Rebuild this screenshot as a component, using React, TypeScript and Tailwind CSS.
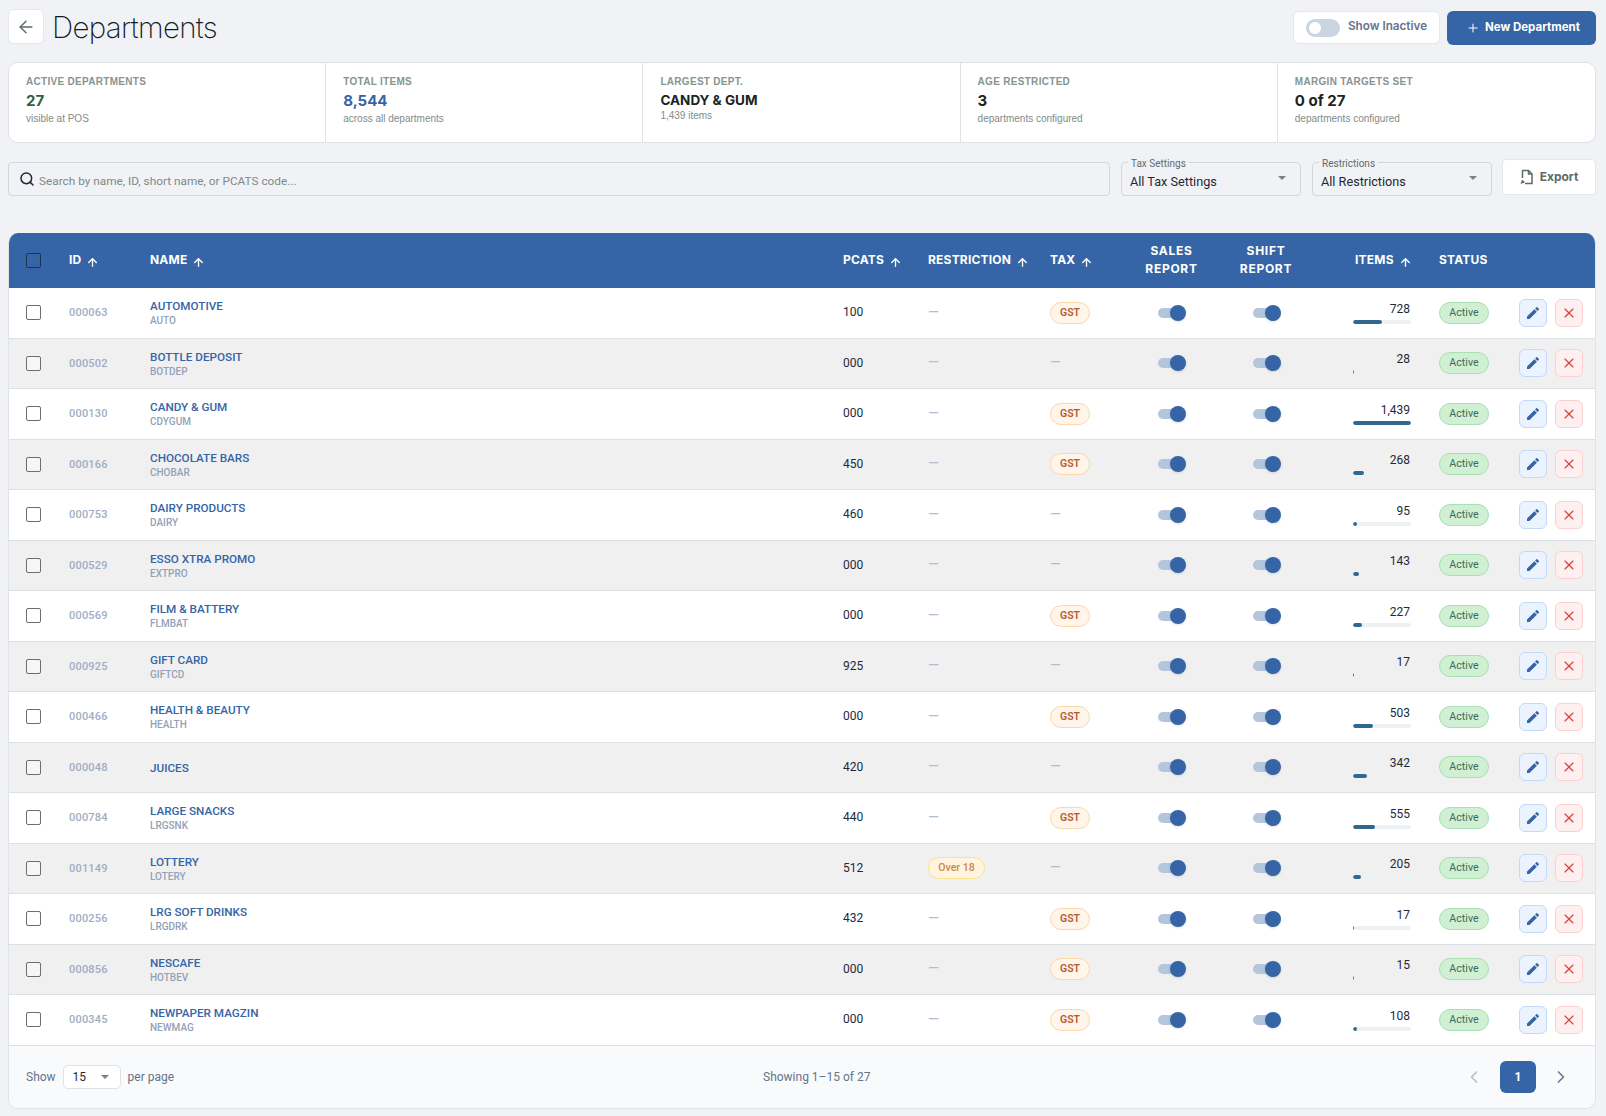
import { ArrowLeft, ArrowUp, ChevronLeft, ChevronRight, Plus, Search, X } from 'lucide-react';
import { MdEdit } from 'react-icons/md';

interface Department {
  id: string;
  name: string;
  short?: string;
  pcats: string;
  tax: boolean;
  restriction?: string;
  items: number;
}

const departments: Department[] = [
  { id: '000063', name: 'AUTOMOTIVE', short: 'AUTO', pcats: '100', tax: true, items: 728 },
  { id: '000502', name: 'BOTTLE DEPOSIT', short: 'BOTDEP', pcats: '000', tax: false, items: 28 },
  { id: '000130', name: 'CANDY & GUM', short: 'CDYGUM', pcats: '000', tax: true, items: 1439 },
  { id: '000166', name: 'CHOCOLATE BARS', short: 'CHOBAR', pcats: '450', tax: true, items: 268 },
  { id: '000753', name: 'DAIRY PRODUCTS', short: 'DAIRY', pcats: '460', tax: false, items: 95 },
  { id: '000529', name: 'ESSO XTRA PROMO', short: 'EXTPRO', pcats: '000', tax: false, items: 143 },
  { id: '000569', name: 'FILM & BATTERY', short: 'FLMBAT', pcats: '000', tax: true, items: 227 },
  { id: '000925', name: 'GIFT CARD', short: 'GIFTCD', pcats: '925', tax: false, items: 17 },
  { id: '000466', name: 'HEALTH & BEAUTY', short: 'HEALTH', pcats: '000', tax: true, items: 503 },
  { id: '000048', name: 'JUICES', pcats: '420', tax: false, items: 342 },
  { id: '000784', name: 'LARGE SNACKS', short: 'LRGSNK', pcats: '440', tax: true, items: 555 },
  { id: '001149', name: 'LOTTERY', short: 'LOTERY', pcats: '512', tax: false, restriction: 'Over 18', items: 205 },
  { id: '000256', name: 'LRG SOFT DRINKS', short: 'LRGDRK', pcats: '432', tax: true, items: 17 },
  { id: '000856', name: 'NESCAFE', short: 'HOTBEV', pcats: '000', tax: true, items: 15 },
  { id: '000345', name: 'NEWPAPER MAGZIN', short: 'NEWMAG', pcats: '000', tax: true, items: 108 },
];

const gridCols = 'grid grid-cols-[44px_81px_693px_85px_122px_90px_95px_94px_110px_80px_92px]';
const maxItems = 1439;

function Stat({ label, value, sub, valueClass, small }: { label: string; value: string; sub: string; valueClass: string; small?: boolean }) {
  return (
    <div className="pl-[17px] pt-[11px] border-r border-[#e0e3e7] last:border-r-0">
      <div className="text-[10px] leading-[15px] font-bold tracking-[0.3px] uppercase text-[#87958f] font-['Liberation_Sans',sans-serif]">{label}</div>
      <div className={`${small ? 'text-[13.5px] leading-[20px]' : 'text-[15px] leading-[22px]'} mt-[1px] font-bold ${valueClass} font-['Inter',sans-serif]`}>{value}</div>
      <div className={`${small ? '-mt-[1px]' : 'mt-0'} text-[10px] leading-[14px] text-[#7f8c88] font-['Liberation_Sans',sans-serif]`}>{sub}</div>
    </div>
  );
}

function Switch() {
  return (
    <div className="relative w-[27px] h-[10px] rounded-full bg-[#b4c5de]">
      <span className="absolute right-[-1px] top-[-3px] w-[16px] h-[16px] rounded-full bg-[#3565a6] shadow-sm" />
    </div>
  );
}

function SelectBox({ label, value }: { label: string; value: string }) {
  return (
    <div className="relative w-[180px] h-[34px] rounded-[4px] border border-[#d3d7dd] flex items-center justify-between pl-[8px] pr-[14px]">
      <span className="absolute left-[6px] top-[-5px] bg-[#f0f2f6] px-[3px] text-[10px] leading-[11px] text-[#5f6b6b]">{label}</span>
      <span className="text-[12.7px] text-[#1f2933] mt-[6px]">{value}</span>
      <span className="w-0 h-0 border-x-[4px] border-x-transparent border-t-[4px] border-t-[#7b8188] mb-[2px]" />
    </div>
  );
}

function HeaderLabel({ children, sort }: { children: React.ReactNode; sort?: boolean }) {
  return (
    <div className="pl-4 pb-[1px] flex items-center gap-[5px] h-full">
      <span>{children}</span>
      {sort && <ArrowUp size={13} strokeWidth={2.5} className="mt-[5px]" />}
    </div>
  );
}

export default function App() {
  return (
    <div className="min-h-[1116px] bg-[#f0f2f6] pl-[8px] pr-[10px] pt-[9px] font-['Roboto',sans-serif] text-[#1e293b]">
      <div className="flex items-center justify-between h-[35px]">
        <div className="flex items-center gap-[8px]">
          <button className="w-[36px] h-[35px] rounded-[6px] bg-white border border-[#e4e7eb] flex items-center justify-center text-[#5f6b6b]">
            <ArrowLeft size={20} strokeWidth={1.75} />
          </button>
          <h1 className="text-[29.5px] leading-[36px] font-extralight tracking-[-0.7px] text-[#141a1f] font-['Inter',sans-serif]">Departments</h1>
        </div>
        <div className="mt-[2px] flex items-center gap-[7px] font-['Inter',sans-serif]">
          <div className="w-[147px] h-[33px] rounded-[6px] bg-white border border-[#e4e7eb] flex items-center pl-[12px] gap-[8px]">
            <div className="relative w-[34px] h-[18px] rounded-full bg-[#cbd5e1]">
              <span className="absolute left-[3px] top-[3px] w-[12px] h-[12px] rounded-full bg-white" />
            </div>
            <span className="text-[11.7px] font-semibold text-[#64748b] mb-[1px]">Show Inactive</span>
          </div>
          <button className="w-[149px] h-[34px] rounded-[6px] bg-[#3565a6] text-white flex items-center pl-[19px] gap-[5px] text-[11.5px] font-bold pt-[1px]">
            <Plus size={14} strokeWidth={1.75} />
            New Department
          </button>
        </div>
      </div>

      <div className="mt-[18px] h-[81px] grid grid-cols-5 rounded-[10px] bg-white border border-[#e0e3e7]">
        <Stat label="Active Departments" value="27" sub="visible at POS" valueClass="text-[#2d5f45]" />
        <Stat label="Total Items" value="8,544" sub="across all departments" valueClass="text-[#3565a6]" />
        <Stat label="Largest Dept." value="CANDY & GUM" sub="1,439 items" valueClass="text-[#1a2421]" small />
        <Stat label="Age Restricted" value="3" sub="departments configured" valueClass="text-[#1a2421]" />
        <Stat label="Margin Targets Set" value="0 of 27" sub="departments configured" valueClass="text-[#1a2421]" />
      </div>

      <div className="mt-[16px] h-[37px] flex items-start">
        <div className="mt-[3px] w-[1102px] h-[34px] rounded-[4px] border border-[#d3d7dd] flex items-center pl-[10px] gap-[4px]">
          <Search size={16} strokeWidth={2.25} className="text-[#1f2933]" />
          <span className="text-[11.8px] text-[#7f8a8a] mt-[6px]">Search by name, ID, short name, or PCATS code...</span>
        </div>
        <div className="mt-[3px] ml-[11px] flex gap-[11px]">
          <SelectBox label="Tax Settings" value="All Tax Settings" />
          <SelectBox label="Restrictions" value="All Restrictions" />
        </div>
        <button className="ml-[10px] w-[94px] h-[36px] rounded-[4px] bg-white border border-[#e4e7eb] flex items-center justify-center gap-[6px] text-[12px] font-bold text-[#5f6b68] font-['Inter',sans-serif]">
          <svg width="14" height="16" viewBox="0 0 14 16" fill="none" stroke="currentColor" strokeWidth="1.5">
            <path d="M5 14.5H12V5L8.5 1.5H2.5V9" />
            <path d="M8.5 1.5V5H12" />
            <path d="M1 14.5L3.5 12M3.5 12H1.5M3.5 12V14" />
          </svg>
          Export
        </button>
      </div>

      <div className="mt-[37px] rounded-[10px] border border-[#e0e3e7] border-t-0 overflow-hidden bg-white">
        <div className={`${gridCols} h-[55px] bg-[#3565a6] text-white text-[12px] font-bold tracking-[0.2px] font-['Inter',sans-serif]`}>
          <div className="pl-[17px] flex items-center">
            <span className="w-[15px] h-[15px] rounded-[2px] border border-[#1f3350]" />
          </div>
          <HeaderLabel sort>ID</HeaderLabel>
          <HeaderLabel sort>NAME</HeaderLabel>
          <HeaderLabel sort>PCATS</HeaderLabel>
          <HeaderLabel sort>RESTRICTION</HeaderLabel>
          <HeaderLabel sort>TAX</HeaderLabel>
          <div className="pb-[2px] flex items-center justify-center text-center leading-[18px] tracking-[0.7px]">SALES<br />REPORT</div>
          <div className="pb-[2px] flex items-center justify-center text-center leading-[18px] tracking-[0.7px]">SHIFT<br />REPORT</div>
          <div className="pl-[42px] pb-[1px] flex items-center gap-[5px]">
            <span>ITEMS</span>
            <ArrowUp size={13} strokeWidth={2.5} className="mt-[5px]" />
          </div>
          <HeaderLabel>STATUS</HeaderLabel>
          <div />
        </div>

        {departments.map((d, i) => (
          <div key={d.id} className={`${gridCols} h-[50.5px] items-center border-b border-[#dcdfe3] ${i % 2 === 1 ? 'bg-[#f0f0f0]' : 'bg-white'}`}>
            <div className="pl-[17px] flex items-center">
              <span className="w-[15px] h-[15px] rounded-[2px] border border-[#6b6f73] bg-white/40" />
            </div>
            <div className="pl-4 pt-[1px] text-[11px] font-medium tracking-[0.2px] text-[#9fadc4]">{d.id}</div>
            <div className="pl-4 pt-[1px]">
              <div className="text-[11.7px] leading-[14px] font-medium text-[#3565a6]">{d.name}</div>
              {d.short && <div className="mt-[1px] text-[10px] leading-[13px] font-medium text-[#94a1b8]">{d.short}</div>}
            </div>
            <div className="pl-4 pb-[1px] text-[12px]">{d.pcats}</div>
            <div className="pl-4 flex items-center">
              {d.restriction ? (
                <span className="inline-flex items-center justify-center w-[57px] h-[22px] rounded-full bg-[#fff4e0] border border-[#fbe38e] text-[10.5px] font-medium text-[#c98a4a] -mt-[1px]">{d.restriction}</span>
              ) : (
                <span className="text-[14px] leading-none text-[#b0bcd0] mb-[2px]">—</span>
              )}
            </div>
            <div className="pl-4 flex items-center">
              {d.tax ? (
                <span className="inline-flex items-center justify-center w-[40px] h-[22px] rounded-full bg-[#fff5eb] border border-[#fbd8a8] text-[10.5px] font-semibold text-[#b85c2e]">GST</span>
              ) : (
                <span className="text-[14px] leading-none text-[#b0bcd0] mb-[2px]">—</span>
              )}
            </div>
            <div className="flex justify-center"><Switch /></div>
            <div className="flex justify-center"><Switch /></div>
            <div className="pl-[40px] pr-[12px]">
              <div className="text-right text-[12px] leading-[14px] pr-[1px]">{d.items.toLocaleString('en-US')}</div>
              <div className="mt-[4px] h-[4px] rounded-full bg-[#eef1f1] overflow-hidden">
                <div className="h-full rounded-full bg-[#32688f]" style={{ width: `${(d.items / maxItems) * 100}%` }} />
              </div>
            </div>
            <div className="pl-4 flex items-center">
              <span className="inline-flex items-center justify-center w-[50px] h-[22px] rounded-full bg-[#d0f0d4] border border-[#a9e0b2] text-[10.7px] font-normal text-[#3f6b55]">Active</span>
            </div>
            <div className="pl-[16px] flex gap-[8px]">
              <button className="w-[28px] h-[28px] rounded-[6px] bg-[#ebf3fe] border border-[#c3d9f7] flex items-center justify-center text-[#3565a6]">
                <MdEdit size={16} />
              </button>
              <button className="w-[28px] h-[28px] rounded-[6px] bg-[#fef0f0] border border-[#fbd0d0] flex items-center justify-center text-[#d9413a]">
                <X size={16} strokeWidth={1.75} />
              </button>
            </div>
          </div>
        ))}

        <div className="h-[62px] bg-[#f9fafc] relative flex items-center justify-between pl-[17px] pr-[24px] text-[12px] text-[#64748b]">
          <div className="flex items-center gap-[7px]">
            <span>Show</span>
            <div className="w-[58px] h-[24px] rounded-[5px] bg-white border border-[#dfe3e8] flex items-center justify-between pl-[9px] pr-[11px] text-[#1e293b]">
              <span>15</span>
              <span className="w-0 h-0 border-x-[4px] border-x-transparent border-t-[4px] border-t-[#7b8188]" />
            </div>
            <span>per page</span>
          </div>
          <span className="absolute left-[754px]">Showing 1–15 of 27</span>
          <div className="flex items-center">
            <ChevronLeft size={20} strokeWidth={2} className="text-[#b8bcc4]" />
            <span className="ml-[16px] mr-[15px] w-[36px] h-[32px] rounded-[6px] bg-[#3565a6] text-white font-bold flex items-center justify-center">1</span>
            <ChevronRight size={20} strokeWidth={2} className="text-[#6b7890]" />
          </div>
        </div>
      </div>
    </div>
  );
}
